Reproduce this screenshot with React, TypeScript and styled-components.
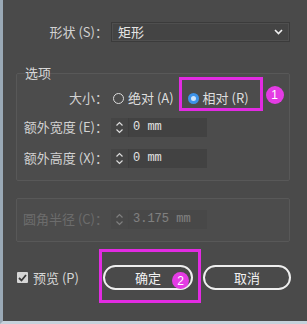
import styled, { createGlobalStyle } from 'styled-components'

const GlobalStyle = createGlobalStyle`
  html, body {
    margin: 0;
    padding: 0;
    background: #4a4a4a;
  }
  body {
    font-family: "Noto Sans CJK SC", "Noto Sans", sans-serif;
    color: #d6d6d6;
  }
`

const magenta = '#e22be2'

const Page = styled.div`
  box-sizing: border-box;
  width: 307px;
  height: 324px;
  border-left: 3px solid #9aa9b6;
  border-bottom: 3px solid #c6d2dc;
  padding-top: 22px;
  display: flex;
  flex-direction: column;
  font-size: 13px;
  line-height: 14px;
  overflow: hidden;
`

const Row = styled.div<{ $gap?: number }>`
  display: flex;
  align-items: center;
  height: 20px;
  gap: ${(p) => p.$gap ?? 3}px;
`

const Label = styled.span<{ $width: number; $dim?: boolean }>`
  width: ${(p) => p.$width}px;
  text-align: right;
  white-space: nowrap;
  color: ${(p) => (p.$dim ? '#6c6c6c' : '#d2d2d2')};
`

const Select = styled.div`
  box-sizing: border-box;
  width: 179px;
  height: 20px;
  background: #444;
  border: 1px solid #3b3b3b;
  box-shadow: inset 0 0 0 1px #4f4f4f;
  display: flex;
  align-items: center;
  justify-content: space-between;
  padding: 0 6px 0 6px;
  color: #e4e4e4;
`

const Box = styled.div<{ $top: number; $pt: number; $pb: number }>`
  margin: ${(p) => p.$top}px 17px 0 13px;
  border: 1px solid #585858;
  border-radius: 2px;
  background: #4c4c4c;
  padding: ${(p) => p.$pt}px 0 ${(p) => p.$pb}px 0;
  display: flex;
  flex-direction: column;
`

const Caption = styled.div`
  margin: -8px 0 0 8px;
  color: #d8d8d8;
  height: 14px;
`

const Radio = styled.span<{ $checked?: boolean }>`
  box-sizing: border-box;
  width: 11px;
  height: 11px;
  border-radius: 50%;
  border: ${(p) => (p.$checked ? '3px solid #3d92e8' : '1.5px solid #dcdcdc')};
  background: ${(p) => (p.$checked ? '#cfe4fa' : 'transparent')};
  margin-right: 4px;
`

const Option = styled.span`
  position: relative;
  display: inline-flex;
  align-items: center;
  height: 20px;
  color: #dedede;
  white-space: nowrap;
`

const Options = styled.span`
  display: flex;
  align-items: center;
  gap: 14px;
  margin-left: 2px;
`

const Spin = styled.div<{ $dim?: boolean }>`
  display: flex;
  height: 19px;
  opacity: ${(p) => (p.$dim ? 0.35 : 1)};
`

const Stepper = styled.div`
  width: 17px;
  background: #454545;
  border-right: 1px solid #3e3e3e;
  display: flex;
  align-items: center;
  justify-content: center;
`

const Field = styled.div`
  width: 78px;
  background: #424242;
  display: flex;
  align-items: center;
  padding-left: 4px;
  box-sizing: border-box;
  font-family: "Liberation Mono", "DejaVu Sans Mono", monospace;
  font-size: 12px;
  color: #e2e2e2;
`

const Footer = styled.div`
  margin-top: 23px;
  padding: 0 16px 0 14px;
  display: flex;
  align-items: center;
  height: 25px;
`

const Check = styled.span`
  width: 11px;
  height: 11px;
  background: #d6d6d6;
  border-radius: 1px;
  display: inline-flex;
  align-items: center;
  justify-content: center;
  margin-right: 5px;
`

const Buttons = styled.div`
  margin-left: auto;
  display: flex;
  gap: 10px;
`

const Button = styled.div<{ $width: number }>`
  position: relative;
  box-sizing: border-box;
  width: ${(p) => p.$width}px;
  height: 25px;
  border: 2px solid #efefef;
  border-radius: 13px;
  display: flex;
  align-items: center;
  justify-content: center;
  color: #f2f2f2;
`

const Frame = styled.span<{ $t: number; $r: number; $b: number; $l: number }>`
  position: absolute;
  top: ${(p) => p.$t}px;
  right: ${(p) => p.$r}px;
  bottom: ${(p) => p.$b}px;
  left: ${(p) => p.$l}px;
  border: 3px solid ${magenta};
  pointer-events: none;
`

const Badge = styled.span<{ $t: number; $r: number; $size: number }>`
  position: absolute;
  top: ${(p) => p.$t}px;
  right: ${(p) => p.$r}px;
  width: ${(p) => p.$size}px;
  height: ${(p) => p.$size}px;
  border-radius: 50%;
  background: #e43be4;
  color: #fff;
  font-family: "Liberation Sans", Arial, sans-serif;
  font-size: 12px;
  display: flex;
  align-items: center;
  justify-content: center;
`

const Chevron = () => (
  <svg width="9" height="6" viewBox="0 0 9 6">
    <path d="M1 1l3.5 3.5L8 1" fill="none" stroke="#f0f0f0" strokeWidth="1.6" />
  </svg>
)

const Arrows = () => (
  <svg width="9" height="15" viewBox="0 0 9 15">
    <path d="M1.5 5.5L4.5 2.5L7.5 5.5M1.5 9.5L4.5 12.5L7.5 9.5" fill="none" stroke="#dcdcdc" strokeWidth="1.2" />
  </svg>
)

const Tick = () => (
  <svg width="9" height="8" viewBox="0 0 9 8">
    <path d="M1 4l2.5 2.5L8 1" fill="none" stroke="#3a3a3a" strokeWidth="1.8" />
  </svg>
)

const SpinField = ({ value, dim }: { value: string; dim?: boolean }) => (
  <Spin $dim={dim}>
    <Stepper>
      <Arrows />
    </Stepper>
    <Field>{value}</Field>
  </Spin>
)

export default function App() {
  return (
    <Page>
      <GlobalStyle />
      <Row>
        <Label $width={105}>形状 (S)：</Label>
        <Select>
          <span>矩形</span>
          <Chevron />
        </Select>
      </Row>

      <Box $top={31} $pt={0} $pb={12}>
        <Caption>选项</Caption>
        <Row style={{ marginTop: 8 }}>
          <Label $width={91}>大小：</Label>
          <Options>
            <Option>
              <Radio />
              绝对 (A)
            </Option>
            <Option>
              <Radio $checked />
              相对 (R)
              <Frame $t={-11} $r={-14} $b={-3} $l={-9} />
              <Badge $t={-2} $r={-35} $size={18}>1</Badge>
            </Option>
          </Options>
        </Row>
        <Row style={{ marginTop: 9 }}>
          <Label $width={91}>额外宽度 (E)：</Label>
          <SpinField value="0 mm" />
        </Row>
        <Row style={{ marginTop: 11 }}>
          <Label $width={91}>额外高度 (X)：</Label>
          <SpinField value="0 mm" />
        </Row>
      </Box>

      <Box $top={17} $pt={10} $pb={12}>
        <Row>
          <Label $width={91} $dim>圆角半径 (C)：</Label>
          <SpinField value="3.175 mm" dim />
        </Row>
      </Box>

      <Footer>
        <Check>
          <Tick />
        </Check>
        <span>预览 (P)</span>
        <Buttons>
          <Button $width={90}>
            确定
            <Frame $t={-18} $r={-10} $b={-15} $l={-6} />
            <Badge $t={5} $r={2} $size={17}>2</Badge>
          </Button>
          <Button $width={88}>取消</Button>
        </Buttons>
      </Footer>
    </Page>
  )
}
